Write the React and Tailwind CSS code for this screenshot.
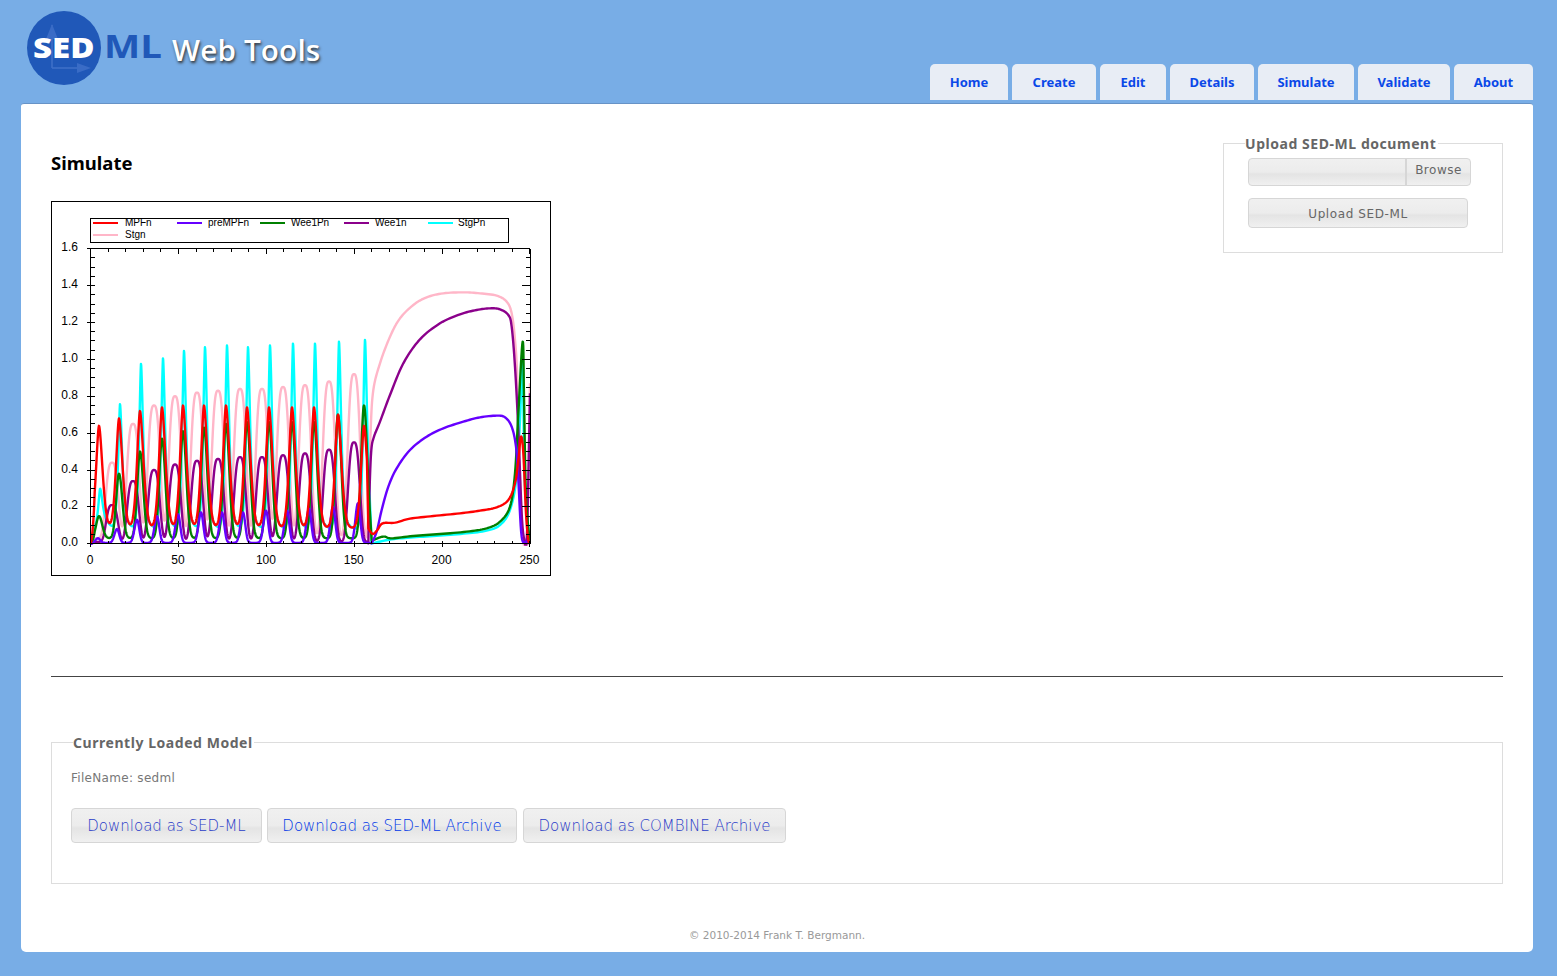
import React from 'react';

const tabs = [
  { label: 'Home', width: 'w-[78px]' },
  { label: 'Create', width: 'w-[84px]' },
  { label: 'Edit', width: 'w-[66px]' },
  { label: 'Details', width: 'w-[84px]' },
  { label: 'Simulate', width: 'w-[96px]' },
  { label: 'Validate', width: 'w-[92px]' },
  { label: 'About', width: 'w-[79px]' },
];

const buttonFace = 'rounded-[4px] border border-[#d6d6d6] bg-[linear-gradient(#f0f0f0_0%,#ececec_50%,#e4e4e4_58%,#f0f0f0_100%)]';

// chart is drawn in page pixels, viewBox starts at the image's corner
const X0 = 90.7;
const PX_PER_T = 1.757;
const Y0 = 543.8;
const PX_PER_V = 184.4;
const toY = (v) => Y0 - v * PX_PER_V;

const shape = (d, rise, fall, pow = 2) => Math.exp(-Math.pow(Math.abs(d) / (d < 0 ? rise : fall), pow));

const mainPeaks = [99, 119, 140, 162, 183, 204, 226, 247, 269, 292, 314, 338, 364];
const slowPeaks = [112, 133, 154, 175, 197, 218, 240, 262, 283, 305, 329, 354];
const bluePeaks = [98, 117, 137, 157, 178, 201, 222, 243, 266, 287, 309, 333, 358];

const cycle = (end, fn) => {
  const pts = [];
  for (let x = X0; x <= end; x += 0.25) {
    const ramp = Math.min(1, (x - X0) / 4);
    pts.push([x, toY(fn(x) * ramp)]);
  }
  return pts;
};

const sum = (peaks, heights, base, rise, fall, pow) => (x) =>
  peaks.reduce((acc, p, i) => acc + (heights[i] - base) * shape(x - p, rise, fall, pow), base);

// plateau points read off the zoomed picture: page = 300 + zx/3, 280 + zy/3
const zoomed = (list) => list.map(([x, y]) => [300 + x / 3, 280 + y / 3]);

const smooth = (pts) => {
  const out = [];
  for (let i = 0; i < pts.length - 1; i++) {
    const p0 = pts[Math.max(0, i - 1)];
    const p1 = pts[i];
    const p2 = pts[i + 1];
    const p3 = pts[Math.min(pts.length - 1, i + 2)];
    for (let s = 0; s < 8; s++) {
      const t = s / 8;
      const t2 = t * t;
      const t3 = t2 * t;
      out.push([
        0.5 * (2 * p1[0] + (p2[0] - p0[0]) * t + (2 * p0[0] - 5 * p1[0] + 4 * p2[0] - p3[0]) * t2 + (3 * p1[0] - p0[0] - 3 * p2[0] + p3[0]) * t3),
        0.5 * (2 * p1[1] + (p2[1] - p0[1]) * t + (2 * p0[1] - 5 * p1[1] + 4 * p2[1] - p3[1]) * t2 + (3 * p1[1] - p0[1] - 3 * p2[1] + p3[1]) * t3),
      ]);
    }
  }
  out.push(pts[pts.length - 1]);
  return out;
};

const toPath = (pts) => 'M' + pts.map(([x, y]) => `${x.toFixed(2)} ${y.toFixed(2)}`).join('L');

const build = (end, fn, plateau) => toPath([...cycle(end, fn), ...smooth(zoomed(plateau))]);

const pinkFn = sum(slowPeaks, [0.44, 0.65, 0.75, 0.8, 0.82, 0.83, 0.84, 0.84, 0.85, 0.86, 0.88, 0.92], 0.03, 7.5, 7.5, 3);
const cyanSpike = sum(mainPeaks.map((p) => p + 1), [0.2, 0.66, 0.88, 0.91, 0.95, 0.97, 0.98, 0.97, 0.98, 0.99, 0.99, 1, 1.01], 0.02, 2.8, 3, 1.5);
const cyanTail = sum(mainPeaks.map((p) => p + 3), mainPeaks.map(() => 0.12), 0.06, 3, 8);
const purpleFn = sum(slowPeaks, [0.21, 0.34, 0.4, 0.43, 0.45, 0.46, 0.47, 0.47, 0.48, 0.49, 0.51, 0.55], 0.01, 7, 7, 3);
const greenFn = sum(mainPeaks, [0.15, 0.38, 0.5, 0.57, 0.61, 0.63, 0.65, 0.66, 0.66, 0.66, 0.66, 0.7, 0.75], 0.03, 4, 4.6);
const blueFn = sum(bluePeaks, [0.03, 0.08, 0.13, 0.15, 0.16, 0.17, 0.17, 0.17, 0.18, 0.18, 0.19, 0.2, 0.22], 0.005, 3.6, 3.2);
const redFn = sum(mainPeaks, [0.64, 0.68, 0.72, 0.74, 0.75, 0.75, 0.75, 0.74, 0.74, 0.74, 0.74, 0.7, 0.64], 0.085, 4.2, 5, 1.7);

const series = [
  {
    color: '#ffb6c8',
    d: build(367, pinkFn, [[205, 700], [212, 450], [220, 330], [240, 250], [270, 170], [300, 115], [340, 75], [380, 52], [430, 40], [490, 37], [540, 40], [590, 47], [620, 65], [635, 100], [645, 180], [652, 300], [660, 600], [670, 780], [680, 785], [690, 310]]),
  },
  {
    color: '#00ffff',
    d: build(369, (x) => cyanSpike(x) + cyanTail(x), [[215, 790], [275, 778], [340, 772], [420, 767], [500, 760], [560, 752], [600, 735], [630, 690], [650, 590], [660, 420], [668, 230], [674, 600], [690, 790]]),
  },
  {
    color: '#8b008b',
    d: build(367, purpleFn, [[205, 790], [209, 620], [214, 510], [222, 470], [240, 425], [270, 345], [310, 250], [360, 178], [420, 130], [480, 103], [530, 90], [570, 85], [600, 88], [625, 105], [635, 140], [645, 260], [655, 450], [665, 700], [672, 775], [680, 785], [685, 600], [690, 340]]),
  },
  {
    color: '#008000',
    d: build(369, greenFn, [[215, 782], [240, 772], [255, 770], [275, 775], [340, 768], [420, 762], [500, 755], [560, 745], [600, 725], [630, 680], [645, 580], [655, 400], [668, 185], [672, 350], [678, 650], [690, 790]]),
  },
  {
    color: '#6600ff',
    d: build(370, blueFn, [[215, 790], [230, 755], [245, 690], [265, 620], [290, 565], [330, 510], [380, 470], [430, 445], [490, 425], [540, 412], [590, 407], [615, 412], [635, 440], [648, 500], [655, 600], [665, 770], [680, 785], [690, 790]]),
  },
  {
    color: '#ff0000',
    d: build(367, redFn, [[205, 745], [218, 762], [232, 750], [248, 730], [285, 728], [330, 716], [400, 708], [480, 700], [540, 692], [590, 682], [625, 660], [645, 610], [655, 540], [663, 470], [670, 520], [678, 700], [685, 780], [690, 790]]),
  },
];

const legend = [
  { label: 'MPFn', color: '#ff0000', x: 93, tx: 125, y: 223 },
  { label: 'preMPFn', color: '#6600ff', x: 177, tx: 208, y: 223 },
  { label: 'Wee1Pn', color: '#008000', x: 260, tx: 291, y: 223 },
  { label: 'Wee1n', color: '#8b008b', x: 344, tx: 375, y: 223 },
  { label: 'StgPn', color: '#00ffff', x: 428, tx: 458, y: 223 },
  { label: 'Stgn', color: '#ffb6c8', x: 93, tx: 125, y: 235 },
];

function Plot() {
  const left = X0;
  const right = 530;
  const top = 248.8;
  const bottom = Y0;
  const yTicks = [];
  for (let i = 0; i <= 32; i++) yTicks.push(i);
  const xTicks = [];
  for (let i = 0; i <= 25; i++) xTicks.push(i);

  return (
    <svg viewBox="51 201 500 375" className="block w-[500px] h-[375px]">
      <rect x="51.5" y="201.5" width="499" height="374" fill="#fff" stroke="#000" />
      <rect x="90.5" y="218.5" width="418" height="24" fill="#fff" stroke="#000" />
      {legend.map((l) => (
        <g key={l.label}>
          <line x1={l.x} x2={l.x + 25} y1={l.y} y2={l.y} stroke={l.color} strokeWidth="2" />
          <text x={l.tx} y={l.y + 3} fontSize="10" fontFamily="'Liberation Sans', sans-serif" fill="#000">{l.label}</text>
        </g>
      ))}

      <clipPath id="plot-area">
        <rect x={left} y={top - 2} width={right - left + 1} height={bottom - top + 4} />
      </clipPath>
      <g clipPath="url(#plot-area)" fill="none" strokeWidth="2.4" strokeLinejoin="round">
        {series.map((s) => (
          <path key={s.color} d={s.d} stroke={s.color} />
        ))}
      </g>

      <g stroke="#000" strokeWidth="1" shapeRendering="crispEdges">
        <line x1={left} x2={left} y1={top} y2={bottom} />
        <line x1={right} x2={right} y1={top} y2={bottom} />
        <line x1={left} x2={right} y1={top} y2={top} />
        <line x1={left} x2={right} y1={bottom} y2={bottom} />
        {yTicks.map((i) => {
          const y = toY(i * 0.05);
          const major = i % 4 === 0;
          return (
            <g key={i}>
              <line x1={left - (major ? 4 : 0)} x2={left + 4} y1={y} y2={y} />
              <line x1={right - (major ? 8 : 4)} x2={right} y1={y} y2={y} />
            </g>
          );
        })}
        {xTicks.map((i) => {
          const x = X0 + i * 10 * PX_PER_T;
          const major = i % 5 === 0;
          return (
            <g key={i}>
              <line x1={x} x2={x} y1={top} y2={top + (major ? 5 : 3)} />
              <line x1={x} x2={x} y1={bottom - 3} y2={bottom + (major ? 3 : 0)} />
            </g>
          );
        })}
      </g>

      <g fontSize="12" fontFamily="'Liberation Sans', sans-serif" fill="#000">
        {[0, 0.2, 0.4, 0.6, 0.8, 1, 1.2, 1.4, 1.6].map((v) => (
          <text key={v} x="78" y={toY(v) + 2.5} textAnchor="end">{v.toFixed(1)}</text>
        ))}
        {[0, 50, 100, 150, 200, 250].map((v) => (
          <text key={v} x={X0 + v * PX_PER_T - 0.5} y="564" textAnchor="middle">{v}</text>
        ))}
      </g>
    </svg>
  );
}

function Logo() {
  return (
    <svg width="140" height="76" viewBox="0 0 140 76" className="block">
      <circle cx="37" cy="37" r="37" fill="#2058b8" />
      <g stroke="#3f70c8" strokeWidth="1.5" fill="#3a6cc6">
        <path d="M25 57V14" fill="none" />
        <path d="M25 57h30" fill="none" />
        <path d="M25 13l-6 15h12zM64 57l-14-5v10z" stroke="none" />
      </g>
      <text transform="translate(6 46.5) scale(1.18 1)" fontSize="28" fontWeight="800" fontFamily="'Open Sans', sans-serif" fill="#fff">SED</text>
      <text transform="translate(77 47) scale(1.2 1)" fontSize="32" fontWeight="700" fontFamily="'Open Sans', sans-serif" fill="#2058b8">ML</text>
    </svg>
  );
}

function Panel({ title, className, legendClass, children }) {
  return (
    <fieldset className={`border border-[#dddddd] ${className}`}>
      <legend className={`font-['Noto_Sans',sans-serif] font-bold text-[14px] leading-[18px] tracking-[0.55px] text-[#666666] ${legendClass}`}>
        {title}
      </legend>
      {children}
    </fieldset>
  );
}

export default function App() {
  return (
    <div className="h-[976px] bg-[#78ade6] pl-[21px] pr-[24px] font-['DejaVu_Sans',sans-serif] overflow-hidden">
      {/* Header */}
      <header className="h-[100px] flex justify-between items-end">
        <div className="flex self-start pt-[11px] pl-[6px]">
          <Logo />
          <div className="ml-[5px] mt-[19px] font-['Open_Sans',sans-serif] font-semibold text-[29.6px] leading-[40px] tracking-[0.2px] text-white [text-shadow:1px_2px_3px_#333]">
            Web Tools
          </div>
        </div>
        <nav className="flex gap-1">
          {tabs.map((tab) => (
            <a
              key={tab.label}
              className={`${tab.width} h-9 pt-[1px] flex items-center justify-center rounded-t-[5px] bg-[#e8edf5] text-[#0a48e8] font-['Noto_Sans',sans-serif] font-bold text-[13px]`}
            >
              {tab.label}
            </a>
          ))}
        </nav>
      </header>

      {/* Content */}
      <main className="mt-[3px] h-[849px] bg-white border-t border-[#6793c6] rounded-b-[5px] rounded-t-[3px] px-[30px] flex flex-col">
        <div className="flex justify-between h-[572px]">
          <div className="pt-[47px]">
            <h1 className="font-['Noto_Sans',sans-serif] font-bold text-[18.5px] leading-[24px] text-black">Simulate</h1>
            <div className="mt-[26px]">
              <Plot />
            </div>
          </div>

          <Panel title="Upload SED-ML document" className="w-[280px] h-[119px] mt-[30px] pl-[24px] pt-[6px]" legendClass="ml-[-3px] pr-[2px] translate-y-[1px]">
            <div className={`w-[223px] h-7 flex text-[12px] tracking-[0.5px] text-[#666666] ${buttonFace}`}>
              <div className="flex-1 border-r-2 border-[#d6d6d6]" />
              <div className="w-[63px] pt-[2px] text-center">Browse</div>
            </div>
            <button className={`mt-3 w-[220px] h-[30px] pt-[1px] text-[12px] tracking-[0.6px] text-[#666666] ${buttonFace}`}>
              Upload SED-ML
            </button>
          </Panel>
        </div>

        <hr className="border-t border-[#444444]" />

        <Panel title="Currently Loaded Model" className="mt-[56px] h-[151px] px-[19px]" legendClass="ml-[2px] pr-[1px] translate-y-[1px]">
          <p className="mt-[19px] text-[12px] leading-4 tracking-[0.3px] text-[#777777]">FileName: sedml</p>
          <div className="mt-[22px] flex gap-[5px] text-[15px] font-extralight">
            <a className={`w-[191px] h-[35px] pt-[1px] flex items-center justify-center text-[#2a3cc8] ${buttonFace}`}>
              Download as SED-ML
            </a>
            <a className={`w-[250px] h-[35px] pt-[1px] flex items-center justify-center text-[#0038e8] ${buttonFace}`}>
              Download as SED-ML Archive
            </a>
            <a className={`ml-[1px] w-[263px] h-[35px] pt-[1px] flex items-center justify-center text-[#2a3cc8] ${buttonFace}`}>
              Download as COMBINE Archive
            </a>
          </div>
        </Panel>

        <footer className="mt-[43px] text-center text-[10.5px] leading-4 text-[#999999]">
          © 2010-2014 Frank T. Bergmann.
        </footer>
      </main>
    </div>
  );
}
